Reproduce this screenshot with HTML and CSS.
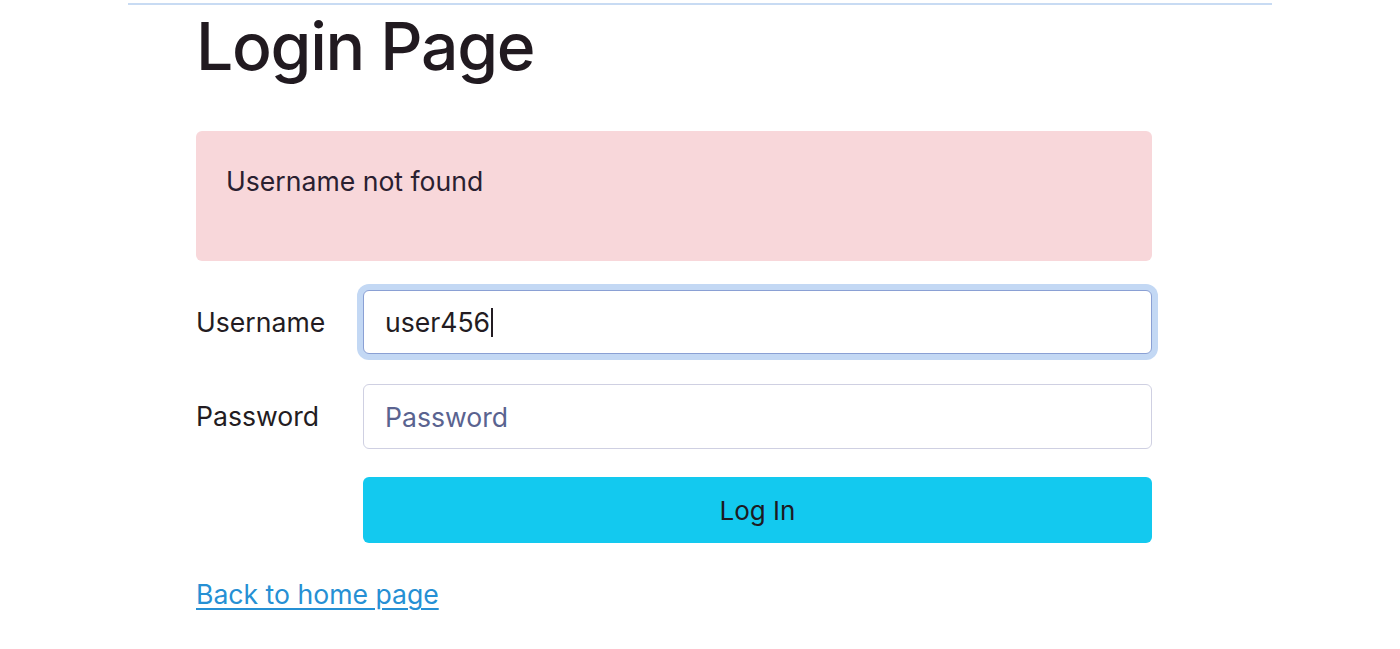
FILE: index.html
```html
<!DOCTYPE html>
<html lang="en">
<head>
<meta charset="utf-8">
<title>Login Page</title>
<link rel="stylesheet" href="styles.css">
</head>
<body>
<div class="page">
  <div class="topline"></div>
  <main class="content">
    <h1 class="title">Login Page</h1>
    <div class="alert"><p class="alert-text">Username not found</p></div>
    <form class="form">
      <div class="row">
        <label class="label" for="username">Username</label>
        <span class="field-wrap">
          <input class="field field-focus" id="username" type="text" value="user456">
          <span class="caret"></span>
        </span>
      </div>
      <div class="row">
        <label class="label" for="password">Password</label>
        <input class="field" id="password" type="password" placeholder="Password">
      </div>
      <div class="row">
        <span></span>
        <button class="btn" type="button">Log In</button>
      </div>
    </form>
    <a class="back" href="#">Back to home page</a>
  </main>
</div>
</body>
</html>
```

FILE: styles.css
```css
* { box-sizing: border-box; }
html, body { margin: 0; padding: 0; background: #fff; }
body {
  font-family: Inter, "Noto Sans", "Liberation Sans", sans-serif;
  color: #231c22;
  font-size: 26.6px;
  line-height: 39px;
}
.page { padding: 0 128px; }
.topline { margin-top: 3px; height: 2px; background: #c8dbf3; }
.content { width: 1024px; padding-left: 68px; }
.title {
  margin: 2px 0 45px;
  font-size: 66px;
  line-height: 79px;
  font-weight: 500;
  letter-spacing: -1.3px;
  color: #211a20;
}
.alert {
  width: 956px;
  background: #f8d7da;
  border-radius: 6px;
  padding: 31px 30px 34px;
}
.alert-text { margin: 0 0 26px; color: #2a2030; }
.form { margin-top: 29px; width: 956px; }
.row {
  display: grid;
  grid-template-columns: 167px 1fr;
  align-items: center;
  margin-bottom: 30px;
}
.row:last-child { margin-bottom: 0; }
.label { color: #231c22; }
.field-wrap { position: relative; display: block; height: 64px; }
.field {
  display: block;
  width: 789px;
  height: 65px;
  border: 1px solid #cfd0e2;
  border-radius: 6px;
  padding: 0 21px;
  font: inherit;
  color: #231c22;
  background: #fff;
  outline: none;
}
.field::placeholder { color: #5a6390; opacity: 1; }
.field-focus {
  height: 64px;
  border-color: #8aa0d4;
  box-shadow: 0 0 0 6px #c3d8f4;
}
.caret {
  position: absolute;
  left: 128px;
  top: 18px;
  width: 1.5px;
  height: 29px;
  background: #231c22;
}
.btn {
  width: 789px;
  height: 66px;
  margin-top: -2px;
  border: none;
  border-radius: 6px;
  background: #13c9ef;
  color: #1d1a22;
  font: inherit;
  font-size: 26px;
  padding: 0;
}
.back {
  display: inline-block;
  margin-top: 32px;
  color: #2690d4;
  text-decoration: underline;
  text-decoration-thickness: 2px;
  text-underline-offset: 4px;
}
```
